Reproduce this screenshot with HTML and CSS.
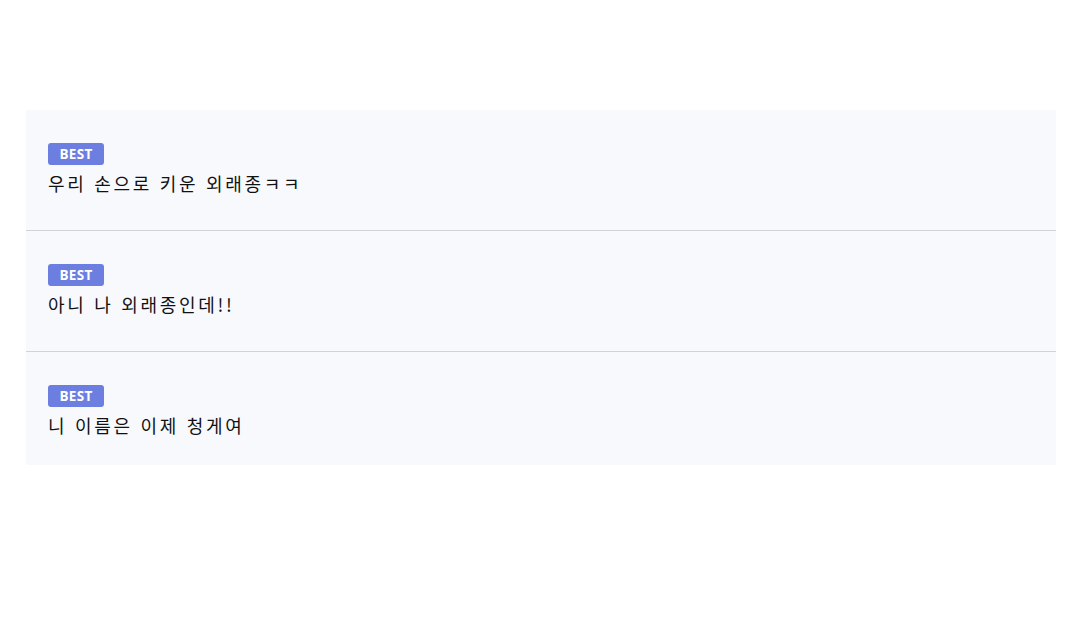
FILE: index.html
```html
<!DOCTYPE html>
<html lang="ko">
<head>
<meta charset="utf-8">
<link rel="stylesheet" href="styles.css">
</head>
<body>
<main class="page">
  <ul class="list">
    <li class="item">
      <span class="badge">BEST</span>
      <p class="text">우리 손으로 키운 외래종ㅋㅋ</p>
    </li>
    <li class="item">
      <span class="badge">BEST</span>
      <p class="text">아니 나 외래종인데!!</p>
    </li>
    <li class="item">
      <span class="badge">BEST</span>
      <p class="text">니 이름은 이제 청게여</p>
    </li>
  </ul>
</main>
</body>
</html>
```
FILE: styles.css
```css
html, body {
  margin: 0;
  padding: 0;
  background: #ffffff;
}
body {
  font-family: "Noto Sans CJK KR", "Noto Sans", sans-serif;
  color: #111111;
}
.page {
  padding: 110px 24px 0 26px;
}
.list {
  list-style: none;
  margin: 0;
  padding: 0;
  width: 1030px;
  background: #f8f9fd;
}
.item {
  display: flex;
  flex-direction: column;
  align-items: flex-start;
  padding: 33px 21px 0 21px;
  height: 87px;
  border-bottom: 1px solid #d2d3d8;
}
.item:last-child {
  border-bottom: none;
  height: 80px;
}
.badge {
  display: inline-flex;
  align-items: center;
  justify-content: center;
  width: 56px;
  height: 22px;
  margin-left: 1px;
  border-radius: 3px;
  background: #6c7fe0;
  color: #ffffff;
  font-family: "Open Sans", "Noto Sans", sans-serif;
  font-weight: 700;
  font-size: 13.5px;
  letter-spacing: 0.3px;
}
.text {
  margin: 5px 0 0 1px;
  font-size: 18px;
  line-height: 26px;
  letter-spacing: 2.7px;
}
```
